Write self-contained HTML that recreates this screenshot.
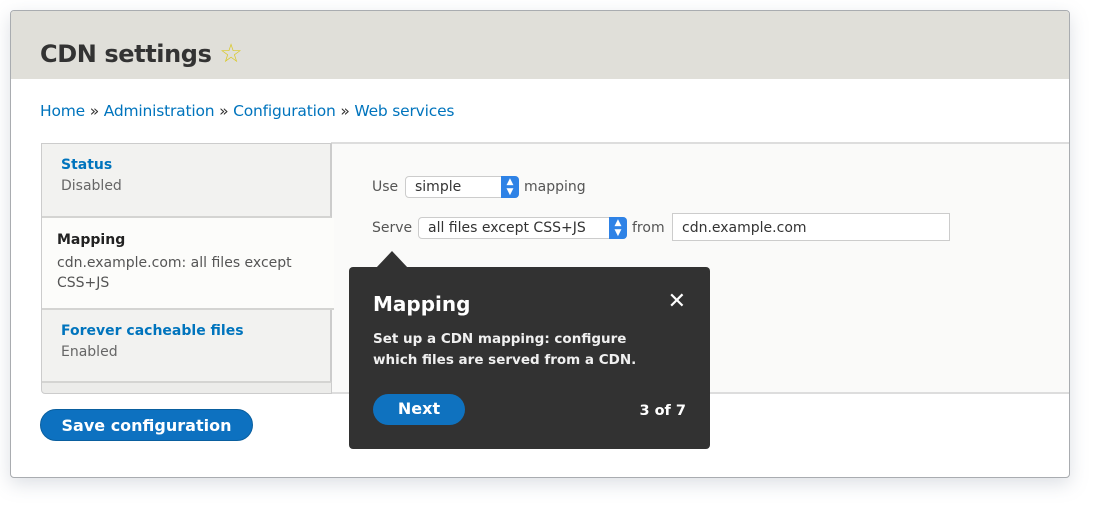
<!DOCTYPE html>
<html><head><style>
*{box-sizing:border-box;margin:0;padding:0}
body{width:1100px;height:509px;background:#fff;font-family:"DejaVu Sans","Liberation Sans",sans-serif;position:relative;overflow:hidden;color:#333}
.win{position:absolute;left:10px;top:10px;width:1060px;height:468px;border:1px solid #a9acb0;border-radius:4px;background:#fff;box-shadow:0 6px 18px rgba(120,130,150,.25);overflow:hidden}
.hdr{position:absolute;left:0;top:0;right:0;height:68px;background:#e0dfd9}
.hdr h1{position:absolute;left:29px;top:28px;font-size:24px;font-weight:bold;color:#333;letter-spacing:-0.4px}
.bc{position:absolute;left:29px;top:91px;font-size:15.5px;color:#0074bd;letter-spacing:-0.2px}
.bc span{color:#333}
.pane{position:absolute;left:320px;top:131px;right:0;height:252px;background:#fafaf9;border-top:2px solid #ddd;border-bottom:2px solid #ddd}
.tabs{position:absolute;left:30px;top:132px;width:291px;height:251px;background:#ececea;border:1px solid #ccc;border-radius:0 0 0 4px}
.tab{position:absolute;left:0;width:290px;background:#f2f2f0;border-bottom:2px solid #d4d4d2;border-right:2px solid #ccc;padding:13px 0 0 19px;font-size:14px}
.tab b{color:#0074bd;display:block;margin-bottom:5px}
.tab .s{color:#666}
.act{background:#fcfcfa;border-right:none;width:292px;padding-left:15px}
.act b{color:#222}
.row{position:absolute;font-size:14px;color:#555}
.sel{position:absolute;height:22px;border:1px solid #ccc;border-radius:4px;background:#fff;font-size:14px;color:#333;padding:2px 0 0 9px}
.sel i{position:absolute;right:-1px;top:-1px;width:18px;height:22px;background:#2e82e6;border-radius:0 4px 4px 0;color:#fff;font-style:normal;font-size:9px;text-align:center;line-height:10px;padding-top:1px}
.inp{position:absolute;left:672px;top:213px;width:278px;height:28px;border:1px solid #ccc;background:#fff;font-size:14px;color:#333;padding:6px 0 0 9px}
.tip{position:absolute;left:349px;top:267px;width:361px;height:182px;background:#323232;border-radius:4px;color:#fff}
.arr{position:absolute;left:376px;top:251px;width:0;height:0;border-left:16px solid transparent;border-right:16px solid transparent;border-bottom:17px solid #323232}
.tip h2{position:absolute;left:24px;top:25px;font-size:20px;font-weight:bold}
.tip .x{position:absolute;right:24px;top:22px;font-size:22px;font-weight:bold}
.tip p{position:absolute;left:24px;top:62px;font-size:13.5px;font-weight:bold;line-height:21px;color:#f0f0f0}
.next{position:absolute;left:24px;top:127px;width:92px;height:31px;border-radius:16px;background:#0f72bf;font-size:16px;font-weight:bold;text-align:center;line-height:30px}
.cnt{position:absolute;right:24px;top:136px;font-size:14.5px;font-weight:bold}
.save{position:absolute;left:40px;top:409px;width:213px;height:32px;border-radius:16px;background:#0d71c0;border:1px solid #0a5f9f;color:#fff;font-weight:bold;font-size:16px;text-align:center;line-height:31px}
</style></head><body>
<div class="win">
<div class="hdr"><h1>CDN settings <span style="color:#d9c92a;font-weight:normal;font-size:26px">☆</span></h1></div>
<div class="bc">Home <span>»</span> Administration <span>»</span> Configuration <span>»</span> Web services</div>
<div class="pane"></div>
<div class="tabs">
<div class="tab" style="top:0;height:74px"><b>Status</b><span class="s">Disabled</span></div>
<div class="tab act" style="top:74px;height:92px;padding-top:14px"><b>Mapping</b><span class="s" style="color:#555;line-height:20px">cdn.example.com: all files except CSS+JS</span></div>
<div class="tab" style="top:166px;height:73px"><b>Forever cacheable files</b><span class="s">Enabled</span></div>
</div>
</div>
<div class="row" style="left:372px;top:179px">Use</div>
<div class="sel" style="left:405px;top:176px;width:114px">simple<i>▲<br>▼</i></div>
<div class="row" style="left:524px;top:179px">mapping</div>
<div class="row" style="left:372px;top:220px">Serve</div>
<div class="sel" style="left:418px;top:217px;width:209px">all files except CSS+JS<i>▲<br>▼</i></div>
<div class="row" style="left:632px;top:220px">from</div>
<div class="inp">cdn.example.com</div>
<div class="save">Save configuration</div>
<div class="arr"></div>
<div class="tip"><h2>Mapping</h2><div class="x">✕</div><p>Set up a CDN mapping: configure<br>which files are served from a CDN.</p><div class="next">Next</div><div class="cnt">3 of 7</div></div>
</body></html>
